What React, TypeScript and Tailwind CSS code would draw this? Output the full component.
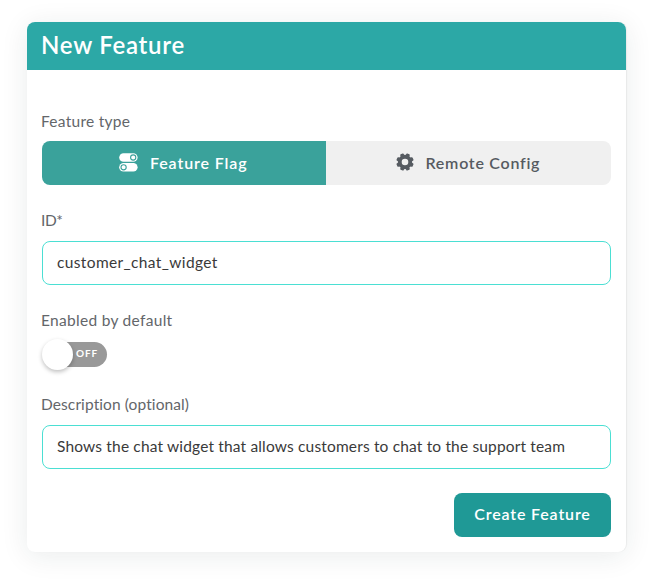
import type { ReactNode } from "react";

function TogglesIcon() {
  return (
    <svg width="19" height="20" viewBox="0 0 19 20" className="-mt-[3px] block shrink-0">
      <rect x="0.2" y="1.2" width="18.4" height="8.6" rx="4.3" fill="#fff" />
      <circle cx="14.2" cy="5.5" r="2.6" fill="#fff" stroke="#3aa29b" strokeWidth="1.1" />
      <rect x="0.2" y="11" width="18.4" height="8.6" rx="4.3" fill="#fff" />
      <circle cx="4.6" cy="15.3" r="2.6" fill="#fff" stroke="#3aa29b" strokeWidth="1.1" />
    </svg>
  );
}

function GearIcon() {
  return (
    <svg width="18" height="18" viewBox="-9 -9 18 18" className="-mt-[3px] block shrink-0" fill="#565b61">
      <circle r="5.25" fill="none" stroke="#565b61" strokeWidth="3.9" />
      {[22.5, 67.5, 112.5, 157.5, 202.5, 247.5, 292.5, 337.5].map((angle) => (
        <rect key={angle} x="-1.9" y="-8.7" width="3.8" height="3.4" rx="0.9" transform={`rotate(${angle})`} />
      ))}
    </svg>
  );
}

function Label({ children, className }: { children: ReactNode; className: string }) {
  return (
    <div className={`-ml-[0.5px] h-5 text-[15.5px] leading-5 whitespace-nowrap text-[#63666a] ${className}`}>
      {children}
    </div>
  );
}

function Field({ value, className }: { value: string; className: string }) {
  return (
    <input
      readOnly
      value={value}
      className={`block h-11 w-full rounded-lg border-[1.3px] border-[#4bdfd3] bg-white px-[14.5px] pb-[2px] text-[15.5px] text-[#3a3a3a] outline-none ${className}`}
    />
  );
}

export default function App() {
  return (
    <div className="h-[584px] w-[654px] overflow-hidden bg-white pt-[22px] pl-[27px] font-['Lato',sans-serif]">
      <div className="h-[530px] w-[599px] rounded-lg bg-white shadow-[0_4px_28px_rgba(20,40,40,0.09),1px_0_1px_rgba(0,0,0,0.05)]">
        <header className="flex h-12 items-center rounded-t-lg bg-[#2ca8a6] pb-[2px] pl-3.5">
          <h1 className="text-[24px] leading-[30px] font-semibold tracking-[0.75px] text-white">New Feature</h1>
        </header>
        <main className="pt-[41px] pr-[15px] pl-[14.5px]">
          <Label className="tracking-[0.27px]">Feature type</Label>
          <div className="mt-2.5 flex h-11 overflow-hidden rounded-lg text-[16px] font-semibold">
            <button className="flex w-[284.5px] items-center bg-[#3aa29b] pl-[77.5px] text-white">
              <TogglesIcon />
              <span className="-mt-px ml-3 tracking-[0.88px]">Feature Flag</span>
            </button>
            <button className="flex flex-1 items-center bg-[#f0f0f0] pl-[69.5px] text-[#565b61]">
              <GearIcon />
              <span className="-mt-px ml-3 tracking-[0.74px]">Remote Config</span>
            </button>
          </div>
          <Label className="mt-[25px] tracking-[-0.4px]">ID*</Label>
          <Field className="mt-[11px] tracking-[0.37px]" value="customer_chat_widget" />
          <Label className="mt-[25px] tracking-[0.3px]">Enabled by default</Label>
          <div className="mt-[9px] flex h-[31px] items-center">
            <div className="z-10 flex size-[31px] shrink-0 rounded-full bg-white shadow-[0_2px_4px_rgba(0,0,0,0.25)]" />
            <div className="-ml-[16px] flex h-[25px] w-[50.5px] items-center rounded-r-full bg-[#999] pb-[2px] pl-[19.5px] text-[10px] font-bold tracking-[0.9px] text-white">
              OFF
            </div>
          </div>
          <Label className="mt-[24px] tracking-[0.1px]">Description (optional)</Label>
          <Field
            className="mt-[11px] tracking-[0.16px]"
            value="Shows the chat widget that allows customers to chat to the support team"
          />
          <div className="mt-6 flex justify-end">
            <button className="h-11 w-[157px] rounded-lg bg-[#1f9996] pb-[2px] text-[16px] font-semibold tracking-[0.84px] text-white">
              Create Feature
            </button>
          </div>
        </main>
      </div>
    </div>
  );
}
